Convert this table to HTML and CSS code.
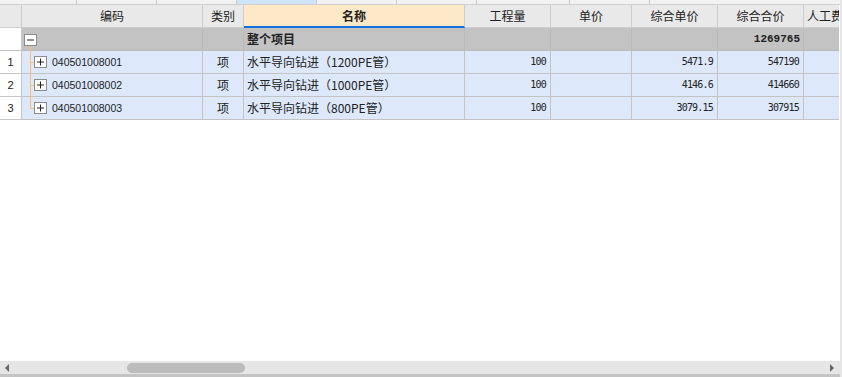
FILE: index.html
```html
<!DOCTYPE html>
<html lang="zh">
<head>
<meta charset="utf-8">
<title>清单</title>
<link rel="stylesheet" href="styles.css">
</head>
<body>
<div class="app">
  <div class="main">
    <div class="tabs">
      <span class="tab t1"></span>
      <span class="tab t2"></span>
      <span class="tab t2"></span>
      <span class="tab t2 active"></span>
      <span class="tab t2"></span>
      <span class="tab t2"></span>
      <span class="tab t3"></span>
      <span class="tab t2"></span>
      <span class="tab rest"></span>
    </div>
    <div class="gridwrap">
      <div class="grid">
        <div class="c h"></div>
        <div class="c h ctr">编码</div>
        <div class="c h ctr">类别</div>
        <div class="c h hn ctr">名称</div>
        <div class="c h ctr">工程量</div>
        <div class="c h ctr">单价</div>
        <div class="c h ctr">综合单价</div>
        <div class="c h ctr">综合合价</div>
        <div class="c h">人工费</div>

        <div class="c rn"></div>
        <div class="c t code">
          <svg class="tree0" width="14" height="22" viewBox="0 0 14 22">
            <line x1="6.5" y1="17" x2="6.5" y2="24" stroke="#fbc06e" stroke-width="1"/>
            <rect x="0.5" y="6.5" width="12" height="11" fill="#fff" stroke="#8c8c8c"/>
            <line x1="3" y1="12" x2="10" y2="12" stroke="#222"/>
          </svg>
        </div>
        <div class="c t"></div>
        <div class="c t b">整个项目</div>
        <div class="c t"></div>
        <div class="c t"></div>
        <div class="c t"></div>
        <div class="c t r num bnum">1269765</div>
        <div class="c t"></div>

        <div class="c rn">1</div>
        <div class="c d code">
          <svg class="tree" width="24" height="22" viewBox="0 0 24 22">
            <line x1="6.5" y1="-1" x2="6.5" y2="24" stroke="#fbc06e"/>
            <line x1="6.5" y1="11.5" x2="10.5" y2="11.5" stroke="#fbc06e"/>
            <rect x="10.5" y="5.5" width="12" height="11" fill="#fff" stroke="#8c8c8c"/>
            <line x1="13" y1="11" x2="20" y2="11" stroke="#222"/>
            <line x1="16.5" y1="7.5" x2="16.5" y2="14.5" stroke="#222"/>
          </svg>
          <span class="codetxt">040501008001</span>
        </div>
        <div class="c d ctr">项</div>
        <div class="c d name">水平导向钻进（1200PE管）</div>
        <div class="c d r num">100</div>
        <div class="c d"></div>
        <div class="c d r num">5471.9</div>
        <div class="c d r num">547190</div>
        <div class="c d"></div>

        <div class="c rn">2</div>
        <div class="c d code">
          <svg class="tree" width="24" height="22" viewBox="0 0 24 22">
            <line x1="6.5" y1="-1" x2="6.5" y2="24" stroke="#fbc06e"/>
            <line x1="6.5" y1="11.5" x2="10.5" y2="11.5" stroke="#fbc06e"/>
            <rect x="10.5" y="5.5" width="12" height="11" fill="#fff" stroke="#8c8c8c"/>
            <line x1="13" y1="11" x2="20" y2="11" stroke="#222"/>
            <line x1="16.5" y1="7.5" x2="16.5" y2="14.5" stroke="#222"/>
          </svg>
          <span class="codetxt">040501008002</span>
        </div>
        <div class="c d ctr">项</div>
        <div class="c d name">水平导向钻进（1000PE管）</div>
        <div class="c d r num">100</div>
        <div class="c d"></div>
        <div class="c d r num">4146.6</div>
        <div class="c d r num">414660</div>
        <div class="c d"></div>

        <div class="c rn">3</div>
        <div class="c d code">
          <svg class="tree" width="24" height="22" viewBox="0 0 24 22">
            <line x1="6.5" y1="-1" x2="6.5" y2="11.5" stroke="#fbc06e"/>
            <line x1="6.5" y1="11.5" x2="10.5" y2="11.5" stroke="#fbc06e"/>
            <rect x="10.5" y="5.5" width="12" height="11" fill="#fff" stroke="#8c8c8c"/>
            <line x1="13" y1="11" x2="20" y2="11" stroke="#222"/>
            <line x1="16.5" y1="7.5" x2="16.5" y2="14.5" stroke="#222"/>
          </svg>
          <span class="codetxt">040501008003</span>
        </div>
        <div class="c d ctr">项</div>
        <div class="c d name">水平导向钻进（800PE管）</div>
        <div class="c d r num">100</div>
        <div class="c d"></div>
        <div class="c d r num">3079.15</div>
        <div class="c d r num">307915</div>
        <div class="c d"></div>
      </div>
    </div>
    <div class="filler"></div>
    <div class="hscroll">
      <span class="arrow left"></span>
      <div class="track"><div class="thumb"></div></div>
      <span class="arrow right"></span>
    </div>
    <div class="bottomline"></div>
  </div>
  <div class="vedge"></div>
</div>
</body>
</html>
```

FILE: styles.css
```css
* { box-sizing: border-box; }
html, body { margin: 0; padding: 0; background: #fff; }
body {
  font-family: "Noto Sans CJK SC", "Liberation Sans", sans-serif;
  font-size: 12px;
  color: #222;
}
.app {
  display: flex;
  width: 842px;
  height: 377px;
  overflow: hidden;
}
.main {
  width: 840px;
  display: flex;
  flex-direction: column;
}
.vedge {
  width: 2px;
  background: #e6e6e6;
}
.tabs {
  display: flex;
  height: 5px;
  background: #f2f2f2;
  border-bottom: 1px solid #cfcfcf;
}
.tab { border-right: 1px solid #c9c9c9; }
.tab.t1 { width: 77px; }
.tab.t2 { width: 80px; }
.tab.t3 { width: 93px; }
.tab.rest { flex: 1; border-right: none; }
.tab.active { background: #cfe4f8; }

.gridwrap {
  width: 839px;
  overflow: hidden;
}
.grid {
  display: grid;
  grid-template-columns: 22px 181px 41px 221px 86px 81px 86px 86px 86px;
  grid-auto-rows: 23px;
  width: 890px;
}
.c {
  display: flex;
  align-items: center;
  border-right: 1px solid #c6c6c6;
  border-bottom: 1px solid #c6c6c6;
  padding: 0 3px;
  white-space: nowrap;
  overflow: hidden;
  line-height: 1;
}
.h {
  background: #e9e9e9;
  color: #222;
  border-color: #cdcdcd;
}
.hn {
  background: #fde8c8;
  font-weight: bold;
  border-bottom: 2px solid #1a6fe0;
}
.ctr { justify-content: center; }
.r { justify-content: flex-end; }
.rn {
  background: #fff;
  justify-content: center;
  font-family: "Liberation Sans", sans-serif;
  font-size: 11px;
  color: #222;
}
.t { background: #c3c3c3; border-color: #bababa; }
.d { background: #dde9fb; border-color: #c3c3c3; }
.b { font-weight: bold; }
.code { padding-left: 2px; overflow: visible; }
.code svg { overflow: visible; flex: none; }
.codetxt {
  margin-left: 4px;
  font-family: "Liberation Sans", sans-serif;
  font-size: 10.5px;
  color: #222;
}
.name {
  font-family: "Noto Sans CJK SC", sans-serif;
  font-size: 12px;
}
.num {
  font-family: "DejaVu Sans Mono", "Liberation Mono", monospace;
  font-size: 10px;
  letter-spacing: -0.8px;
  padding-right: 4px;
  color: #222;
}
.bnum {
  font-family: "Liberation Mono", monospace;
  font-weight: bold;
  font-size: 11px;
  letter-spacing: 0;
  padding-right: 3px;
}
.filler { flex: 1; background: #fff; }
.hscroll {
  height: 13px;
  background: #e6e6e6;
  display: flex;
  align-items: center;
}
.track {
  flex: 1;
  height: 13px;
  display: flex;
  align-items: center;
}
.thumb {
  margin-left: 114px;
  width: 118px;
  height: 10px;
  border-radius: 5px;
  background: #bcbcbc;
}
.arrow {
  width: 0;
  height: 0;
  border-top: 4.5px solid transparent;
  border-bottom: 4.5px solid transparent;
}
.arrow.left {
  margin-left: 5px;
  margin-right: 4px;
  border-right: 4px solid #66666e;
}
.arrow.right {
  margin-left: 4px;
  margin-right: 6px;
  border-left: 4px solid #66666e;
}
.bottomline {
  height: 3px;
  background: #c4c4c4;
}
```
